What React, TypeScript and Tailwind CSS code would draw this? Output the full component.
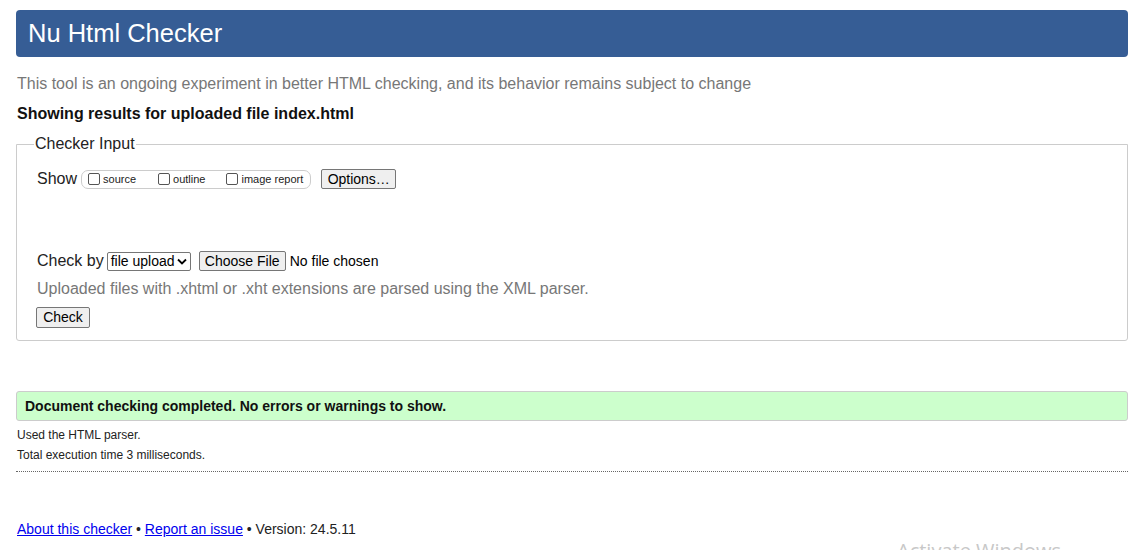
import React from "react";

export default function App() {
  const font = { fontFamily: '"Liberation Sans", Arial, sans-serif' };
  return (
    <div className="relative h-[550px] w-[1144px] overflow-hidden bg-white text-black" style={font}>
      <div className="mx-4 pt-[10px]">
        <div className="flex h-[47px] items-center rounded-[4px] bg-[#365d95] pl-3">
          <h1 className="text-[25.5px] leading-none text-white">Nu Html Checker</h1>
        </div>
        <p className="mt-[18px] pl-[1px] text-[16px] leading-[18px] text-[#777]">
          This tool is an ongoing experiment in better HTML checking, and its behavior remains subject to change
        </p>
        <p className="mt-[12px] pl-[1px] text-[16px] font-bold leading-[18px] text-[#111]">
          Showing results for uploaded file index.html
        </p>
        <fieldset className="mt-[12px] h-[206px] rounded-b-[3px] border border-[#ccc] pb-2 pl-5 pr-4">
          <legend className="ml-[-3px] px-[1px] text-[16px] leading-[18px] text-[#222]">Checker Input</legend>
          <div className="mt-[14px] flex items-center">
            <span className="text-[16px] text-[#222]">Show</span>
            <div className="ml-[4px] flex h-[19px] items-center rounded-[7px] border border-[#ccc] pl-[6px] pr-[7px] text-[11px] text-[#222]">
              <span className="inline-block h-[12px] w-[12px] rounded-[2px] border border-[#555] bg-white" />
              <span className="ml-[3px]">source</span>
              <span className="ml-[22px] inline-block h-[12px] w-[12px] rounded-[2px] border border-[#555] bg-white" />
              <span className="ml-[3px]">outline</span>
              <span className="ml-[21px] inline-block h-[12px] w-[12px] rounded-[2px] border border-[#555] bg-white" />
              <span className="ml-[3px]">image report</span>
            </div>
            <button className="ml-[10px] flex h-[20px] w-[75px] items-center justify-center rounded-[2px] border border-[#767676] bg-[#efefef] text-[14px] text-black">
              Options…
            </button>
          </div>
          <div className="mt-[58px] flex items-center">
            <span className="text-[16px] text-[#222]">Check by</span>
            <div className="ml-[3px] flex h-[19px] w-[84px] items-center justify-between rounded-[2px] border border-[#767676] bg-white pl-[3px] pr-[3px] text-[14px] text-black">
              <span>file upload</span>
              <svg width="10" height="7" viewBox="0 0 10 7">
                <path d="M1 1.5 L5 5.5 L9 1.5" fill="none" stroke="#000" strokeWidth="1.8" />
              </svg>
            </div>
            <button className="ml-[8px] flex h-[20px] w-[87px] items-center justify-center rounded-[2px] border border-[#767676] bg-[#efefef] text-[14px] text-black">
              Choose File
            </button>
            <span className="ml-[4px] text-[14px] text-black">No file chosen</span>
          </div>
          <p className="mt-[7px] text-[16px] leading-[18px] text-[#777]">
            Uploaded files with .xhtml or .xht extensions are parsed using the XML parser.
          </p>
          <button className="ml-[-1px] mt-[9px] flex h-[21px] w-[54px] items-center justify-center rounded-[2px] border border-[#767676] bg-[#efefef] text-[14px] text-black">
            Check
          </button>
        </fieldset>
        <div className="mt-[50px] flex h-[30px] items-center rounded-[3px] border border-[#ccc] bg-[#ccffcc] pl-2 text-[14px] font-bold text-[#111]">
          Document checking completed. No errors or warnings to show.
        </div>
        <p className="mt-[7px] pl-[1px] text-[12px] leading-[14px] text-[#222]">Used the HTML parser.</p>
        <p className="mt-[6px] pl-[1px] text-[12px] leading-[14px] text-[#222]">Total execution time 3 milliseconds.</p>
        <div className="mt-[9px] border-t border-dotted border-[#666]" />
        <p className="mt-[49px] pl-[1px] text-[14px] leading-[16px] text-[#222]">
          <a href="#" className="text-[#00e] underline">About this checker</a> •{" "}
          <a href="#" className="text-[#00e] underline">Report an issue</a> • Version: 24.5.11
        </p>
      </div>
      <div className="absolute left-[897px] top-[538px] text-[20px] leading-[26px] text-[#c8c8c8]" style={{ fontFamily: '"Open Sans", sans-serif' }}>
        Activate Windows
      </div>
    </div>
  );
}
